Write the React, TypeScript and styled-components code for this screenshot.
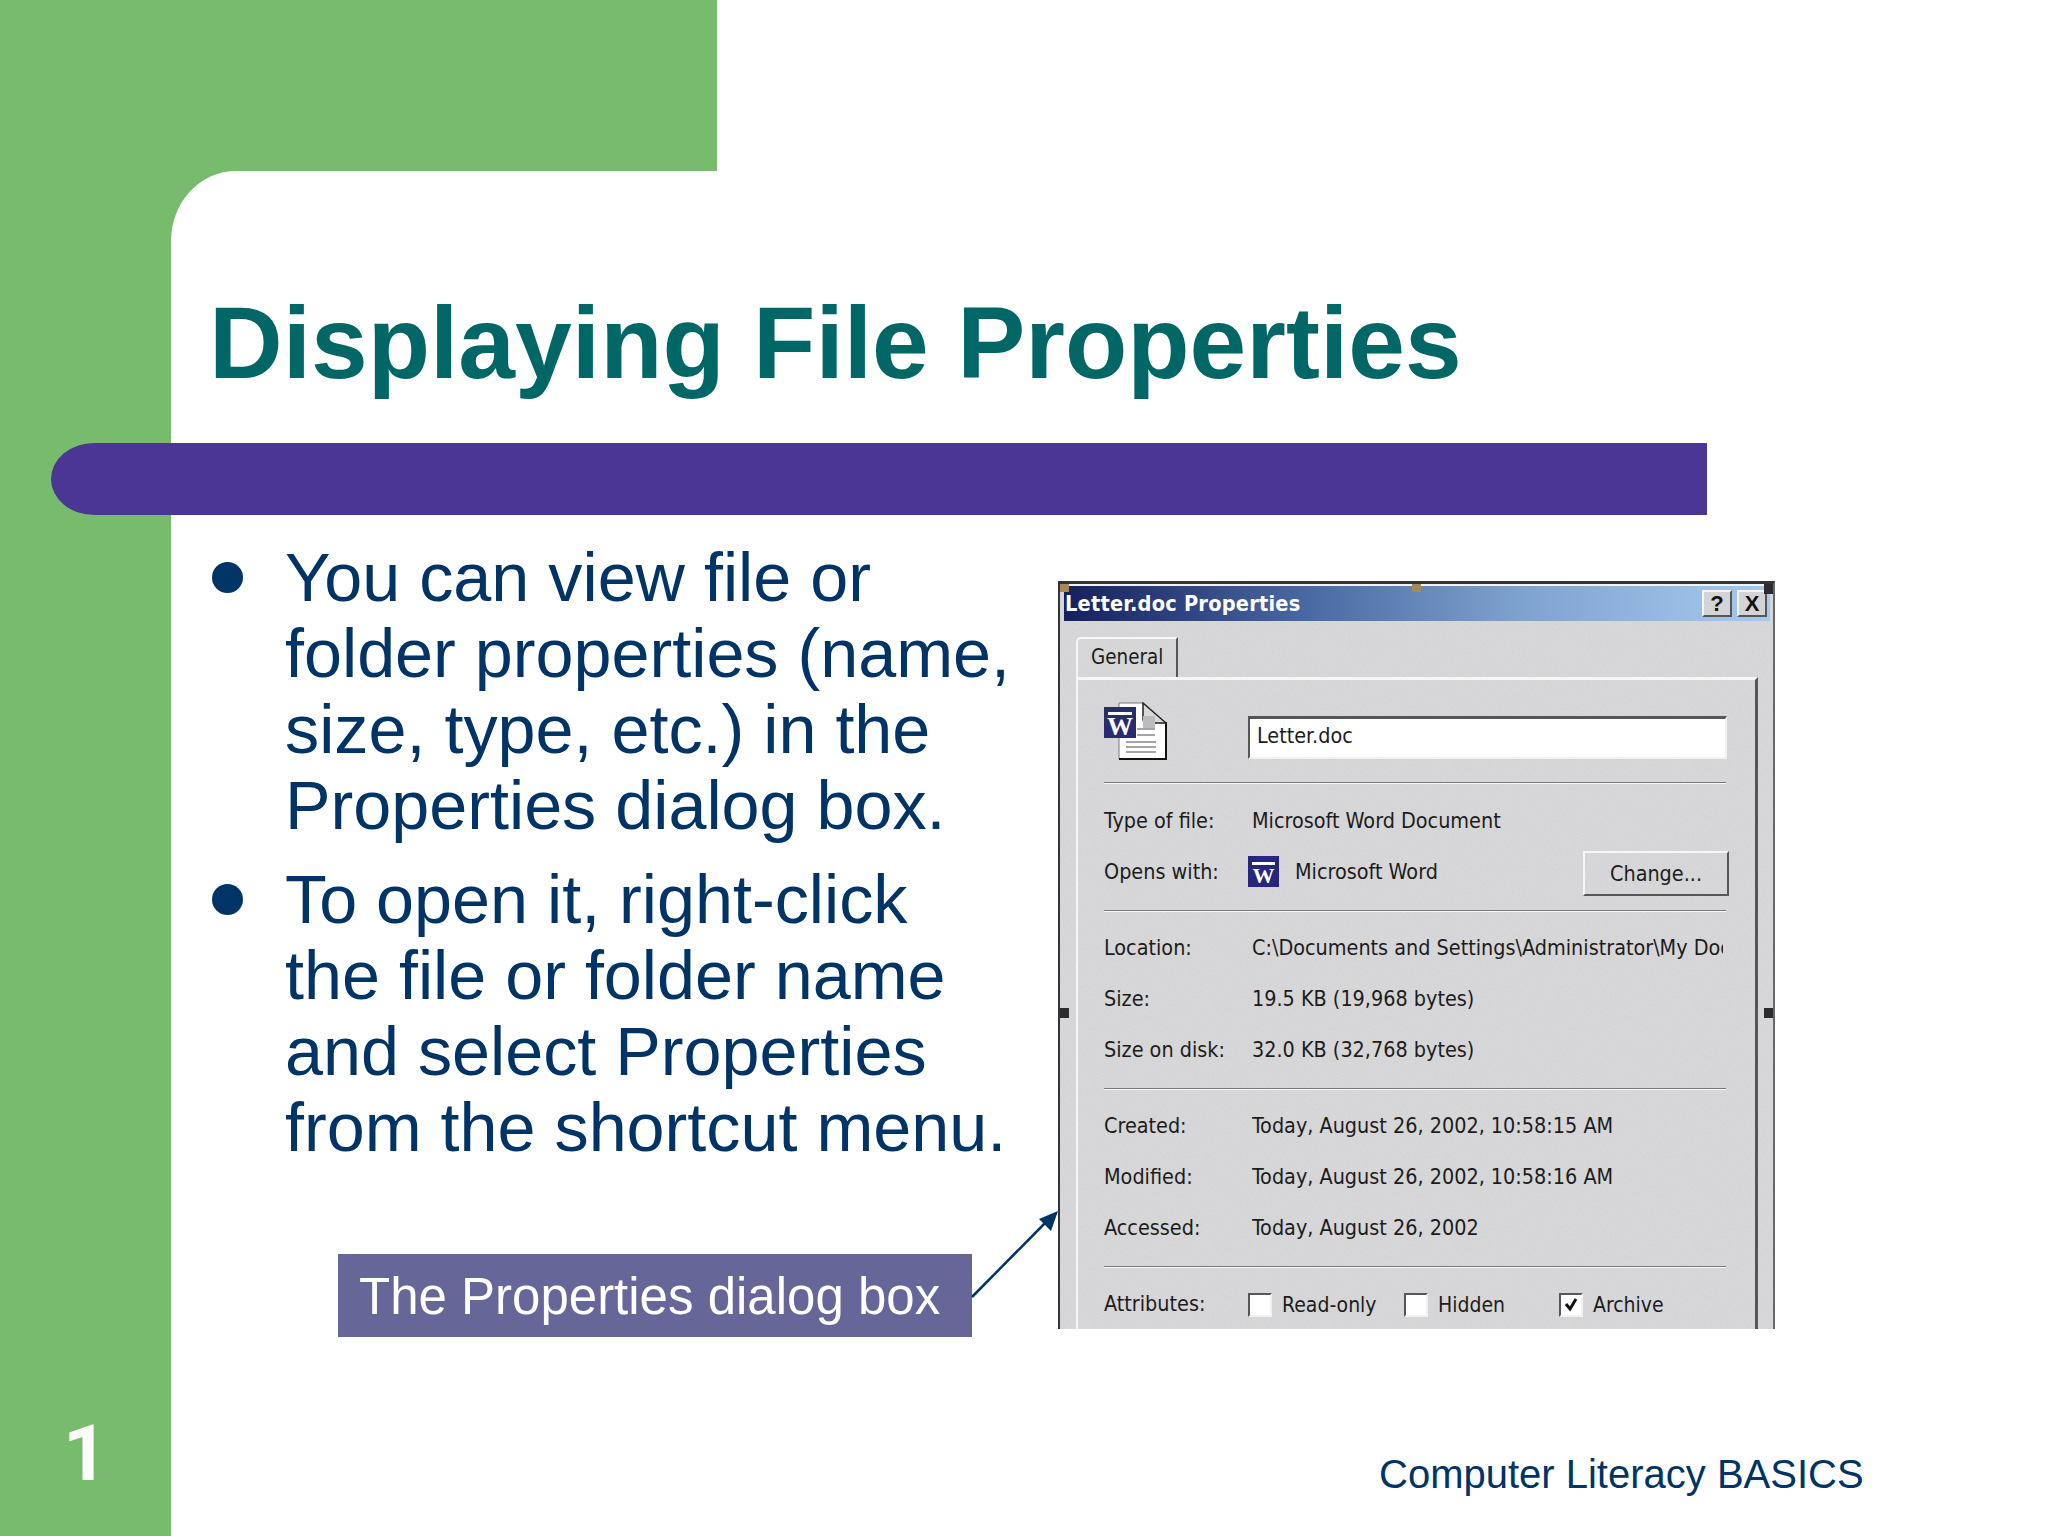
import styled, { createGlobalStyle } from "styled-components";

const GREEN = "#77bb6d";
const NAVY = "#003366";

const NOISE =
  "data:image/svg+xml,%3Csvg xmlns='http://www.w3.org/2000/svg' width='240' height='240'%3E%3Cfilter id='n'%3E%3CfeTurbulence type='fractalNoise' baseFrequency='0.7' numOctaves='2'/%3E%3CfeColorMatrix values='0 0 0 0 0.5 0 0 0 0 0.5 0 0 0 0 0.5 0 0 0 0.35 -0.08'/%3E%3C/filter%3E%3Crect width='240' height='240' filter='url(%23n)'/%3E%3C/svg%3E";

const GlobalStyle = createGlobalStyle`
  html, body {
    margin: 0;
    padding: 0;
    background: #fff;
  }
  * {
    box-sizing: border-box;
  }
`;

const Slide = styled.div`
  width: 2048px;
  height: 1536px;
  display: flex;
  flex-direction: column;
  overflow: hidden;
  background: #fff;
  font-family: "Liberation Sans", Arial, sans-serif;
`;

const TopBand = styled.div`
  width: 717px;
  height: 171px;
  flex: none;
  background: ${GREEN};
`;

const Body = styled.div`
  flex: 1;
  display: flex;
  background: linear-gradient(${GREEN}, ${GREEN}) no-repeat 0 0 / 300px 100px;
`;

const Sidebar = styled.aside`
  width: 171px;
  flex: none;
  display: flex;
  flex-direction: column;
  justify-content: flex-end;
  padding: 0 0 38px 63px;
  background: ${GREEN};
`;

const PageNumber = styled.div`
  font-family: Roboto, "Liberation Sans", sans-serif;
  font-size: 78px;
  line-height: 88px;
  font-weight: 700;
  color: #fff;
`;

const Main = styled.main`
  flex: 1;
  min-width: 0;
  display: flex;
  flex-direction: column;
  position: relative;
  background: #fff;
  border-top-left-radius: 65px 70px;
`;

const Title = styled.h1`
  margin: 0;
  height: 272px;
  padding: 112px 0 0 38px;
  font-size: 102px;
  line-height: 120px;
  font-weight: 700;
  color: #006666;
  white-space: nowrap;
`;

const Bar = styled.div`
  width: 1656px;
  height: 72px;
  flex: none;
  margin-left: -120px;
  position: relative;
  background: #4b3695;
  border-radius: 43px 0 0 43px / 36px 0 0 36px;
`;

const Content = styled.div`
  display: flex;
  align-items: flex-start;
`;

const TextColumn = styled.div`
  width: 887px;
  flex: none;
  padding: 24px 0 0 41px;
`;

const BulletList = styled.ul`
  list-style: none;
  margin: 0;
  padding: 0;
  display: flex;
  flex-direction: column;
  gap: 18px;
`;

const BulletItem = styled.li`
  display: flex;
  gap: 42px;
  font-size: 68.3px;
  line-height: 76px;
  color: ${NAVY};
  white-space: nowrap;
`;

const Dot = styled.span`
  width: 31px;
  height: 31px;
  flex: none;
  margin-top: 23px;
  border-radius: 50%;
  background: ${NAVY};
`;

const Caption = styled.div`
  width: 634px;
  height: 83px;
  margin: 89px 0 0 126px;
  padding-left: 21px;
  background: #666699;
  color: #fff;
  font-size: 51px;
  line-height: 86px;
  white-space: nowrap;
`;

const Arrow = styled.svg`
  position: absolute;
  left: 800px;
  top: 1040px;
  width: 90px;
  height: 90px;
  overflow: visible;
`;

const Footer = styled.div`
  position: absolute;
  left: 1208px;
  top: 1278px;
  font-size: 40px;
  line-height: 50px;
  color: ${NAVY};
  white-space: nowrap;
`;

/* dialog screenshot */
const Dialog = styled.section`
  width: 717px;
  height: 748px;
  flex: none;
  margin-top: 66px;
  position: relative;
  overflow: hidden;
  padding: 2px 0 0;
  background: #d9d9db url("${NOISE}");
  box-shadow: inset 0 2px 0 #f2f2f2;
  border-left: 2px solid #33333a;
  border-right: 2px solid #66666c;
  border-top: 3px solid #33333a;
  font-family: "DejaVu Sans", sans-serif;
  font-stretch: condensed;
  font-size: 21.4px;
  color: #1c1c1c;
`;

const TitleBar = styled.div`
  height: 35px;
  margin: 0 3px 0 4px;
  padding: 0 3px 0 1px;
  display: flex;
  align-items: center;
  justify-content: space-between;
  background: linear-gradient(90deg, #15205e 0%, #4a6aa4 35%, #7fa3cf 65%, #a6caee 100%);
  color: #fff;
  font-weight: 700;
  font-size: 21.6px;
  white-space: nowrap;
`;

const TitleText = styled.span`
  letter-spacing: 0.2px;
`;

const TitleButtons = styled.div`
  display: flex;
  gap: 5px;
`;

const TitleButton = styled.span`
  width: 30px;
  height: 27px;
  display: flex;
  align-items: center;
  justify-content: center;
  background: #d4d4d6;
  border: 2px solid;
  border-color: #f4f4f4 #55555a #55555a #f4f4f4;
  color: #111;
  font-family: "Liberation Sans", sans-serif;
  font-size: 22px;
  font-weight: 700;
`;

const Handle = styled.span<{ $x: number; $y: number; $tan?: boolean }>`
  position: absolute;
  left: ${(p) => p.$x}px;
  top: ${(p) => p.$y}px;
  width: 9px;
  height: ${(p) => (p.$tan ? 8 : 10)}px;
  background: ${(p) => (p.$tan ? "#a58a58" : "#2c2c30")};
`;

const TabStrip = styled.div`
  padding: 16px 0 0 16px;
  display: flex;
  flex-direction: column;
`;

const Tab = styled.div`
  width: 102px;
  height: 40px;
  padding: 0 0 2px 13px;
  display: flex;
  align-items: center;
  font-size: 20.4px;
  border-left: 2px solid #f6f6f6;
  border-top: 2px solid #f6f6f6;
  border-right: 2px solid #55555a;
  border-top-left-radius: 5px;
  position: relative;
  z-index: 1;
`;

const Panel = styled.div`
  width: 682px;
  height: 660px;
  padding: 22px 26px 0 26px;
  border-top: 3px solid #f6f6f6;
  border-left: 2px solid #f6f6f6;
  border-right: 3px solid #55555a;
`;

const IconRow = styled.div`
  height: 58px;
  display: flex;
  align-items: flex-start;
  gap: 81px;
`;

const FileIcon = styled.svg`
  width: 63px;
  height: 58px;
  flex: none;
`;

const NameInput = styled.div`
  width: 479px;
  height: 43px;
  margin-top: 14px;
  padding: 0 0 5px 7px;
  display: flex;
  align-items: center;
  background: #fff;
  border-top: 3px solid #55555a;
  border-left: 2px solid #55555a;
  border-bottom: 2px solid #f2f2f2;
  border-right: 2px solid #f2f2f2;
`;

const Sep = styled.hr<{ $top?: boolean }>`
  width: 622px;
  height: 2px;
  margin: ${(p) => (p.$top ? "22px" : "0")} 0 0;
  border: 0;
  border-top: 1px solid #77777c;
  border-bottom: 1px solid #f8f8f8;
`;

const Section = styled.div<{ $first?: boolean }>`
  padding: ${(p) => (p.$first ? "11px" : "10px")} 0 13px;
`;

const Row = styled.div`
  height: 51px;
  display: flex;
  align-items: center;
  white-space: nowrap;
`;

const Label = styled.span`
  width: 144px;
  flex: none;
`;

const Value = styled.span`
  margin-left: 4px;
  width: 471px;
  overflow: hidden;
`;

const OpensIcon = styled.svg`
  width: 31px;
  height: 31px;
  flex: none;
  margin-right: 16px;
`;

const OpensName = styled.span`
  flex: 1;
`;

const ChangeButton = styled.div`
  width: 146px;
  height: 45px;
  margin-top: 3px;
  display: flex;
  align-items: center;
  justify-content: center;
  border: 2px solid;
  border-color: #f6f6f6 #55555a #55555a #f6f6f6;
`;

const CheckItem = styled.div<{ $width: number }>`
  width: ${(p) => p.$width}px;
  padding-top: 3px;
  display: flex;
  align-items: center;
  gap: 10px;
  font-size: 21px;
`;

const CheckBox = styled.span`
  width: 24px;
  height: 24px;
  flex: none;
  display: flex;
  align-items: center;
  justify-content: center;
  background: #fff;
  border-top: 2px solid #55555a;
  border-left: 2px solid #55555a;
  border-bottom: 2px solid #f2f2f2;
  border-right: 2px solid #f2f2f2;
`;

const PROPS_1 = [
  ["Location:", "C:\\Documents and Settings\\Administrator\\My Documents"],
  ["Size:", "19.5 KB (19,968 bytes)"],
  ["Size on disk:", "32.0 KB (32,768 bytes)"],
];

const PROPS_2 = [
  ["Created:", "Today, August 26, 2002, 10:58:15 AM"],
  ["Modified:", "Today, August 26, 2002, 10:58:16 AM"],
  ["Accessed:", "Today, August 26, 2002"],
];

function PropRows({ rows }: { rows: string[][] }) {
  return (
    <Section>
      {rows.map(([label, value]) => (
        <Row key={label}>
          <Label>{label}</Label>
          <Value>{value}</Value>
        </Row>
      ))}
    </Section>
  );
}

function WordDocIcon() {
  return (
    <FileIcon viewBox="0 0 63 58">
      <path d="M15 1 H39 L62 21 V57 H15 Z" fill="#fff" stroke="#777" strokeWidth="1" />
      <path d="M15 57 H62 V20" fill="none" stroke="#111" strokeWidth="2" />
      <path d="M39 1 L62 21 H43 Q39 21 39 17 Z" fill="#d8d8d8" stroke="#222" strokeWidth="1.5" />
      <rect x="39" y="14" width="12" height="14" fill="#bcbcbe" />
      <path d="M33 27 H51 M33 33 H51 M22 40 H52 M22 45 H52 M22 50 H52" stroke="#a4a4a8" strokeWidth="2" />
      <rect x="0" y="5" width="32" height="31" fill="#2a2a72" />
      <rect x="4" y="10" width="24" height="3" fill="#fff" />
      <text x="16" y="33" textAnchor="middle" fontFamily="Liberation Serif, serif" fontWeight="700" fontSize="26" fill="#fff">
        W
      </text>
    </FileIcon>
  );
}

function WordIcon() {
  return (
    <OpensIcon viewBox="0 0 31 31">
      <rect width="31" height="31" fill="#26267e" />
      <rect x="4" y="6" width="23" height="3" fill="#fff" />
      <text x="15.5" y="27" textAnchor="middle" fontFamily="Liberation Serif, serif" fontWeight="700" fontSize="22" fill="#fff">
        W
      </text>
    </OpensIcon>
  );
}

function PropertiesDialog() {
  return (
    <Dialog>
      <TitleBar>
        <TitleText>Letter.doc Properties</TitleText>
        <TitleButtons>
          <TitleButton>?</TitleButton>
          <TitleButton>X</TitleButton>
        </TitleButtons>
      </TitleBar>
      <TabStrip>
        <Tab>General</Tab>
        <Panel>
          <IconRow>
            <WordDocIcon />
            <NameInput>Letter.doc</NameInput>
          </IconRow>
          <Sep $top />
          <Section $first>
            <Row>
              <Label>Type of file:</Label>
              <Value>Microsoft Word Document</Value>
            </Row>
            <Row>
              <Label>Opens with:</Label>
              <WordIcon />
              <OpensName>Microsoft Word</OpensName>
              <ChangeButton>Change...</ChangeButton>
            </Row>
          </Section>
          <Sep />
          <PropRows rows={PROPS_1} />
          <Sep />
          <PropRows rows={PROPS_2} />
          <Sep />
          <Section>
            <Row>
              <Label>Attributes:</Label>
              <CheckItem $width={156}>
                <CheckBox />
                Read-only
              </CheckItem>
              <CheckItem $width={155}>
                <CheckBox />
                Hidden
              </CheckItem>
              <CheckItem $width={120}>
                <CheckBox>
                  <svg width="16" height="16" viewBox="0 0 16 16">
                    <path d="M3 7 L7 12 L13 2" fill="none" stroke="#111" strokeWidth="3" />
                  </svg>
                </CheckBox>
                Archive
              </CheckItem>
            </Row>
          </Section>
        </Panel>
      </TabStrip>
      <Handle $x={0} $y={0} $tan />
      <Handle $x={704} $y={0} />
      <Handle $x={352} $y={0} $tan />
      <Handle $x={0} $y={424} />
      <Handle $x={704} $y={424} />
    </Dialog>
  );
}

export default function App() {
  return (
    <>
      <GlobalStyle />
      <Slide>
        <TopBand />
        <Body>
          <Sidebar>
            <PageNumber>1</PageNumber>
          </Sidebar>
          <Main>
            <Title>Displaying File Properties</Title>
            <Bar />
            <Content>
              <TextColumn>
                <BulletList>
                  <BulletItem>
                    <Dot />
                    <span>
                      You can view file or
                      <br />
                      folder properties (name,
                      <br />
                      size, type, etc.) in the
                      <br />
                      Properties dialog box.
                    </span>
                  </BulletItem>
                  <BulletItem>
                    <Dot />
                    <span>
                      To open it, right-click
                      <br />
                      the file or folder name
                      <br />
                      and select Properties
                      <br />
                      from the shortcut menu.
                    </span>
                  </BulletItem>
                </BulletList>
                <Caption>The Properties dialog box</Caption>
              </TextColumn>
              <PropertiesDialog />
            </Content>
            <Arrow viewBox="0 0 90 90">
              <path d="M1 86 L78 8" stroke={NAVY} strokeWidth="2.5" fill="none" />
              <path d="M87 0 L80 20 L68 8 Z" fill={NAVY} />
            </Arrow>
            <Footer>Computer Literacy BASICS</Footer>
          </Main>
        </Body>
      </Slide>
    </>
  );
}
